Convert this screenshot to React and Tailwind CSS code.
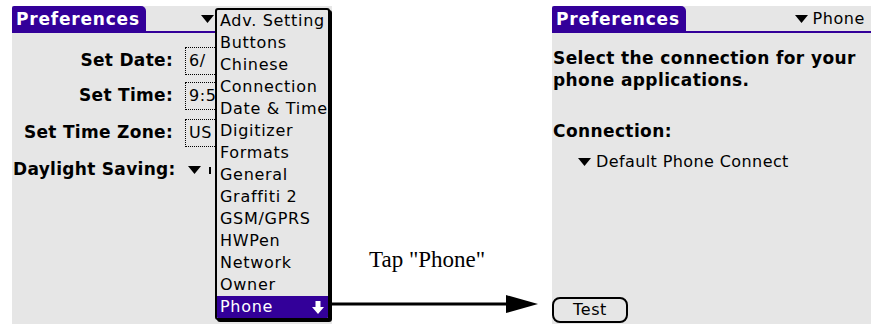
import React from 'react';

const menuItems = [
  'Adv. Setting',
  'Buttons',
  'Chinese',
  'Connection',
  'Date & Time',
  'Digitizer',
  'Formats',
  'General',
  'Graffiti 2',
  'GSM/GPRS',
  'HWPen',
  'Network',
  'Owner',
  'Phone',
];

const Triangle = ({ className = '' }) => (
  <svg width="13" height="8" viewBox="0 0 13 8" className={className}>
    <polygon points="0,0 13,0 6.5,8" fill="black" />
  </svg>
);

// Barra de título estilo Palm
const TitleBar = ({ right }) => (
  <div className="flex h-[27px] shrink-0">
    <div className="w-[134px] bg-[#330099] rounded-tr-[5px] rounded-tl-[2px] text-white font-bold text-[17px] tracking-[0.8px] pl-[4px] leading-[27px]">
      Preferences
    </div>
    <div className="flex-1 border-b-2 border-[#330099] flex items-center">{right}</div>
  </div>
);

const FieldRow = ({ label, value, className = '' }) => (
  <div className={`flex items-center h-[28px] ${className}`}>
    <div className="w-[161px] text-right font-bold text-[17px] tracking-[0.3px]">{label}</div>
    <div className="ml-[12px] w-[40px] h-[28px] pl-[3px] border border-dotted border-black flex items-center text-[16px] tracking-[0.6px] whitespace-nowrap">
      {value}
    </div>
  </div>
);

const LeftScreen = () => (
  <div className="w-[320px] h-[320px] shrink-0 bg-[#e6e6e6] relative flex flex-col">
    <TitleBar
      right={
        <div className="pl-[55px] flex items-center">
          <Triangle />
        </div>
      }
    />
    <FieldRow label="Set Date:" value="6/" className="mt-[14px]" />
    <FieldRow label="Set Time:" value="9:5" className="mt-[7px]" />
    <FieldRow label="Set Time Zone:" value="US" className="mt-[9px]" />
    <div className="flex items-center h-[28px] mt-[9px]">
      <div className="font-bold text-[17px] tracking-[0.3px] pl-[1px] w-[176px]">Daylight Saving:</div>
      <Triangle />
      <div className="ml-[8px] w-[2px] h-[7px] bg-black" />
    </div>

    {/* Menú desplegable */}
    <div className="absolute left-[203px] top-[2px] w-[115px] bg-[#e6e6e6] border-2 border-black rounded-[3px] shadow-[2px_2px_0_#000] overflow-hidden">
      {menuItems.map((item) => {
        const active = item === 'Phone';
        return (
          <div
            key={item}
            className={`h-[22px] flex items-center justify-between pl-[3px] pr-[4px] text-[16px] tracking-[0.7px] whitespace-nowrap ${
              active ? 'bg-[#330099] text-white' : 'text-black'
            }`}
          >
            <span>{item}</span>
            {active && (
              <svg width="12" height="13" viewBox="0 0 12 13">
                <polygon points="3.5,0 8.5,0 8.5,6 12,6 6,13 0,6 3.5,6" fill="white" />
              </svg>
            )}
          </div>
        );
      })}
    </div>
  </div>
);

const Middle = () => (
  <div className="w-[220px] shrink-0 flex flex-col pt-[241px]">
    <div className="pl-[37px] font-['Liberation_Serif',serif] text-[23px] leading-[26px] text-black">
      Tap "Phone"
    </div>
    <svg width="206" height="18" viewBox="0 0 206 18" className="mt-[22px]">
      <line x1="0" y1="9" x2="178" y2="9" stroke="black" strokeWidth="3" />
      <polygon points="174,0 206,9 174,18" fill="black" />
    </svg>
  </div>
);

const RightScreen = () => (
  <div className="w-[320px] h-[320px] shrink-0 bg-[#e6e6e6] flex flex-col">
    <TitleBar
      right={
        <div className="flex-1 flex justify-end items-center gap-[4px] pr-[7px] text-[16px] tracking-[0.6px]">
          <Triangle />
          <span>Phone</span>
        </div>
      }
    />
    <div className="mt-[14px] pl-[1px] font-bold text-[17px] tracking-[0.4px] leading-[22px] whitespace-nowrap">
      Select the connection for your
      <br />
      phone applications.
    </div>
    <div className="mt-[29px] pl-[1px] font-bold text-[17px] tracking-[0.4px] leading-[22px]">Connection:</div>
    <div className="mt-[9px] pl-[26px] flex items-center gap-[5px] text-[16px] tracking-[0.4px] leading-[22px]">
      <Triangle />
      <span>Default Phone Connect</span>
    </div>
    <div className="mt-auto mb-[3px]">
      <div className="w-[76px] h-[26px] border-2 border-black rounded-[8px] flex items-center justify-center text-[16px] tracking-[0.6px]">
        Test
      </div>
    </div>
  </div>
);

export default function App() {
  return (
    <div className="w-[871px] h-[324px] bg-white flex pt-[6px] pl-[12px] overflow-hidden font-['DejaVu_Sans',sans-serif] text-black">
      <LeftScreen />
      <Middle />
      <RightScreen />
    </div>
  );
}
